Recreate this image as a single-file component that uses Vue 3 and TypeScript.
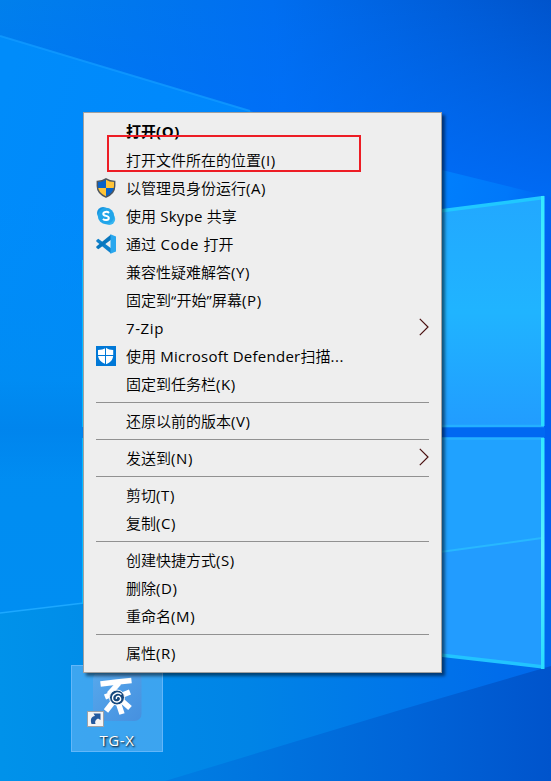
<script setup lang="ts">
type Entry = { text?: string; icon?: 'uac' | 'skype' | 'code' | 'defender'; bold?: boolean; sub?: boolean; sep?: boolean }

const entries: Entry[] = [
  { text: '打开(O)', bold: true },
  { text: '打开文件所在的位置(I)' },
  { text: '以管理员身份运行(A)', icon: 'uac' },
  { text: '使用 Skype 共享', icon: 'skype' },
  { text: '通过 Code 打开', icon: 'code' },
  { text: '兼容性疑难解答(Y)' },
  { text: '固定到“开始”屏幕(P)' },
  { text: '7-Zip', sub: true },
  { text: '使用 Microsoft Defender扫描...', icon: 'defender' },
  { text: '固定到任务栏(K)' },
  { sep: true },
  { text: '还原以前的版本(V)' },
  { sep: true },
  { text: '发送到(N)', sub: true },
  { sep: true },
  { text: '剪切(T)' },
  { text: '复制(C)' },
  { sep: true },
  { text: '创建快捷方式(S)' },
  { text: '删除(D)' },
  { text: '重命名(M)' },
  { sep: true },
  { text: '属性(R)' },
]

// Latin and Chinese runs use different faces and metrics; short Latin runs are set looser.
function runs(text: string): { s: string; latin: boolean; short: boolean }[] {
  return (text.match(/[\u4e00-\u9fff]+|[^\u4e00-\u9fff]+/g) ?? []).map((s) => {
    const latin = !/[\u4e00-\u9fff]/.test(s)
    return { s, latin, short: latin && s.length > 1 && s.length <= 6 }
  })
}
</script>

<template>
  <main class="desktop">
    <svg class="wallpaper" viewBox="0 0 551 781" aria-hidden="true">
      <defs>
        <linearGradient id="base" gradientUnits="userSpaceOnUse" x1="0" y1="60" x2="551" y2="0">
          <stop offset="0" stop-color="#0080ec" />
          <stop offset="0.5" stop-color="#006ef0" />
          <stop offset="1" stop-color="#0054cc" />
        </linearGradient>
        <linearGradient id="fall" gradientUnits="userSpaceOnUse" x1="0" y1="0" x2="0" y2="190">
          <stop offset="0" stop-color="#0070ff" stop-opacity="0" />
          <stop offset="1" stop-color="#0070ff" stop-opacity="0.75" />
        </linearGradient>
        <linearGradient id="beam" gradientUnits="userSpaceOnUse" x1="0" y1="100" x2="551" y2="250">
          <stop offset="0" stop-color="#008cfa" />
          <stop offset="0.7" stop-color="#0084ff" />
          <stop offset="0.9" stop-color="#0078fa" />
          <stop offset="1" stop-color="#0060f0" />
        </linearGradient>
        <linearGradient id="left" gradientUnits="userSpaceOnUse" x1="0" y1="200" x2="0" y2="615">
          <stop offset="0" stop-color="#008ef4" stop-opacity="0" />
          <stop offset="0.5" stop-color="#008cf2" />
          <stop offset="1" stop-color="#008ef2" />
        </linearGradient>
        <linearGradient id="low" gradientUnits="userSpaceOnUse" x1="0" y1="720" x2="551" y2="700">
          <stop offset="0" stop-color="#0092ea" />
          <stop offset="0.45" stop-color="#0084e6" />
          <stop offset="1" stop-color="#0068ec" />
        </linearGradient>
        <linearGradient id="corner" gradientUnits="userSpaceOnUse" x1="190" y1="760" x2="551" y2="760">
          <stop offset="0" stop-color="#007ce2" />
          <stop offset="0.6" stop-color="#0064d8" />
          <stop offset="1" stop-color="#0054cc" />
        </linearGradient>
        <linearGradient id="paneA" x1="0" y1="0" x2="0" y2="1">
          <stop offset="0" stop-color="#22a8ff" />
          <stop offset="0.5" stop-color="#20b4ff" />
          <stop offset="1" stop-color="#219cff" />
        </linearGradient>
        <linearGradient id="edge" x1="0" y1="0" x2="0" y2="1">
          <stop offset="0" stop-color="#32e8ff" />
          <stop offset="0.5" stop-color="#58f0ff" />
          <stop offset="1" stop-color="#28dcff" />
        </linearGradient>
        <linearGradient id="band" x1="0" y1="0" x2="0" y2="1">
          <stop offset="0" stop-color="#0080ea" stop-opacity="0" />
          <stop offset="0.5" stop-color="#0080ea" stop-opacity="0.6" />
          <stop offset="1" stop-color="#0080ea" stop-opacity="0" />
        </linearGradient>
      </defs>
      <rect width="551" height="781" fill="url(#base)" />
      <rect width="551" height="781" fill="url(#fall)" />
      <path d="M0 36 L250 111 L442 170 L551 197 V781 H0Z" fill="url(#beam)" />
      <path d="M0 36 L250 111" stroke="#109aff" stroke-opacity="0.8" stroke-width="2" fill="none" />
      <rect y="200" width="84" height="415" fill="url(#left)" />
      <rect y="380" width="84" height="100" fill="url(#band)" />
      <path d="M0 613 L84 603 L551 600 V781 H0Z" fill="url(#low)" />
      <path d="M0 613 L84 603" stroke="#1ca8ff" stroke-width="1.5" />
      <path d="M551 666 L400 710 L165 781 H551Z" fill="url(#corner)" />
      <path d="M82.500 260 V427 M82.500 438 V604" stroke="#08b8ff" stroke-width="1" />
      <path d="M440 210 L544 197 V427 H440Z" fill="url(#paneA)" />
      <path d="M440 438 H544 V668 L440 655Z" fill="#229cff" />
      <path d="M440 438 H544 V538 L440 552Z" fill="#20a2ff" />
      <path d="M440 552 L542 538" stroke="#28b8ff" stroke-width="2" />
      <rect x="440" y="427.500" width="105" height="10" fill="#0068f2" />
      <path d="M440 426 H544 M440 438.500 H544" stroke="#24b0ff" stroke-width="2.500" />
      <path d="M440 211 L544 197.500" stroke="#20c8ff" stroke-width="3.500" />
      <path d="M440 655 L544 667" stroke="#22c4ff" stroke-width="3.500" />
      <rect x="541" y="196" width="3.500" height="230" fill="url(#edge)" />
      <rect x="541" y="438" width="3.500" height="231" fill="url(#edge)" />
    </svg>

    <section class="shortcut">
      <svg class="app-icon" viewBox="0 0 62 58" aria-hidden="true">
        <defs>
          <linearGradient id="tile" x1="0" y1="0" x2="1" y2="1">
            <stop offset="0" stop-color="#56a8ec" />
            <stop offset="1" stop-color="#4690df" />
          </linearGradient>
        </defs>
        <rect x="7" y="-2" width="48.500" height="49" rx="7" fill="url(#tile)" />
        <g stroke="#fff" fill="none">
          <path d="M14.500 10 L31 8 L45.500 6.500" stroke-width="5.500" />
          <path d="M33 9 L23 20 M29 19 L19 23 M27 28 L20 37 M32 28 L36 40 M35 26 L44 34 M34 22 L44 18" stroke-width="5.500" />
        </g>
        <circle cx="31" cy="23.500" r="7.500" fill="#15477c" stroke="#fff" stroke-width="1" />
        <path d="M35.500 20.500 C31 17 25 21 27 26 C29 29.500 35.500 28 34.500 24 C33 21 29.500 22.500 30.500 25" fill="none" stroke="#fff" stroke-width="1.400" />
        <rect x="1.500" y="37.500" width="16" height="15" fill="#f4f4f4" stroke="#9ca2a8" />
        <path d="M5.500 50 C4 45 5.500 42.500 9 42 L7.500 39.500 H14.500 V46 L12 44.500 C9.500 45.500 8.500 47.500 9.500 50Z" fill="#245a9f" />
      </svg>
      <span class="shortcut-name">TG-X</span>
    </section>

    <nav class="menu">
      <template v-for="(e, i) in entries" :key="i">
        <div v-if="e.sep" class="sep"></div>
        <div v-else class="item" :class="{ bold: e.bold }">
          <span class="icon">
            <svg v-if="e.icon === 'uac'" viewBox="0 0 20 20">
              <path d="M10 0.700 C7.500 2.600 4.500 3.300 1.200 3.300 V8 C1.200 13.500 5 17 10 19.300 C15 17 18.800 13.500 18.800 8 V3.300 C15.500 3.300 12.500 2.600 10 0.700Z" fill="#ffc438" />
              <path d="M10 1 C7.500 3 4.500 3.600 1.500 3.600 V10 H10Z M10 10 H18.400 C17.500 14 14.500 17 10 19Z" fill="#0862c8" />
              <path d="M10 0.900 C7.500 2.700 4.500 3.400 1.300 3.400 V8 C1.300 13.500 5 17 10 19.100 C15 17 18.700 13.500 18.700 8 V3.400 C15.500 3.400 12.500 2.700 10 0.900Z" fill="none" stroke="#4c555f" stroke-width="1.400" />
            </svg>
            <svg v-else-if="e.icon === 'skype'" viewBox="0 0 20 20">
              <circle cx="7" cy="7" r="6" fill="#1493df" />
              <circle cx="13.200" cy="13" r="6" fill="#35b5f1" />
              <circle cx="10" cy="10" r="8.200" fill="#22a5e9" />
              <path d="M13 7 C11.500 5.300 7.300 5.500 7.300 7.900 C7.300 10.500 12.800 9.300 12.800 12 C12.800 14.600 8.500 14.600 7 12.800" fill="none" stroke="#fff" stroke-width="2" />
            </svg>
            <svg v-else-if="e.icon === 'code'" viewBox="0 0 20 20">
              <path d="M0.300 6.300 L2.300 4.800 L15 14.300 V19.500 L0.300 7.500Z" fill="#0f80cb" />
              <path d="M0.300 13.700 L2.300 15.200 L15 5.700 V0.500 L0.300 12.500Z" fill="#0876bd" />
              <path d="M14.500 0.300 L20 2.500 V17.500 L14.500 19.700Z" fill="#29a7ee" />
            </svg>
            <svg v-else-if="e.icon === 'defender'" viewBox="0 0 20 20">
              <rect width="20" height="20" fill="#0078d7" />
              <path d="M10 1.800 C7.500 3.500 5 4 2 4 V9 C2 13.500 5.500 16.500 10 18.300 C14.500 16.500 17.200 13.500 17.200 9 V4 C14.500 4 12 3.500 10 1.800Z" fill="#fff" />
              <path d="M9.500 1 V19 M1.500 9.500 H18" stroke="#0078d7" stroke-width="1" />
            </svg>
          </span>
          <span class="label"><span v-for="(r, k) in runs(e.text ?? '')" :key="k" :class="{ latin: r.latin, short: r.short }">{{ r.s }}</span></span>
          <svg v-if="e.sub" class="arrow" viewBox="0 0 10 18"><path d="M0.800 0.800 L9 9 L0.800 17.200" fill="none" stroke="#4a1010" stroke-width="1.200" /></svg>
        </div>
      </template>
    </nav>
    <div class="highlight"></div>
  </main>
</template>

<style>
body {
  margin: 0;
}
</style>

<style scoped>
.desktop {
  position: relative;
  width: 551px;
  height: 781px;
  overflow: hidden;
  font-family: "Noto Sans CJK SC", sans-serif;
}
.wallpaper {
  display: block;
  width: 551px;
  height: 781px;
}
.menu {
  position: absolute;
  left: 83px;
  top: 112px;
  box-sizing: border-box;
  width: 359px;
  height: 561px;
  padding: 5px 12px;
  border: 1px solid #a0a0a0;
  background: #eee;
  box-shadow: 3px 3px 3px rgba(0, 0, 0, 0.5);
}
.item {
  display: flex;
  align-items: center;
  height: 28px;
  font-size: 15px;
  line-height: 28px;
  color: #000;
}
.icon {
  width: 20px;
  height: 20px;
  margin-right: 10px;
}
.icon svg {
  display: block;
  width: 20px;
  height: 20px;
}
.label {
  flex: 1;
  height: 28px;
  white-space: pre;
  font-weight: 350;
}
.latin {
  font-family: "Open Sans", "Noto Sans", sans-serif;
  font-size: 15px;
  font-weight: 400;
  letter-spacing: 0.25px;
}
.short {
  letter-spacing: 0.6px;
}
.bold .label {
  margin-top: -2px;
}
.bold .label,
.bold .latin {
  font-weight: 700;
}
.arrow {
  width: 10px;
  height: 18px;
  margin-top: -2px;
}
.sep {
  display: flex;
  align-items: center;
  height: 9px;
}
.sep::before {
  content: "";
  width: 100%;
  height: 1px;
  background: #919191;
}
.highlight {
  position: absolute;
  left: 107px;
  top: 135px;
  box-sizing: border-box;
  width: 254px;
  height: 37px;
  border: 2px solid #ed1c24;
}
.shortcut {
  position: absolute;
  left: 71px;
  top: 665px;
  box-sizing: border-box;
  width: 92px;
  height: 87px;
  padding: 8px 0 0 14px;
  border: 1px solid rgba(125, 195, 255, 0.6);
  background: rgba(110, 185, 245, 0.55);
}
.app-icon {
  display: block;
  width: 62px;
  height: 58px;
}
.shortcut-name {
  display: block;
  width: 62px;
  margin-top: -1px;
  text-align: center;
  font: 400 15px/18px "Open Sans", sans-serif;
  letter-spacing: 0.6px;
  color: #fff;
  text-shadow: 1px 1px 2px #000;
}
</style>
